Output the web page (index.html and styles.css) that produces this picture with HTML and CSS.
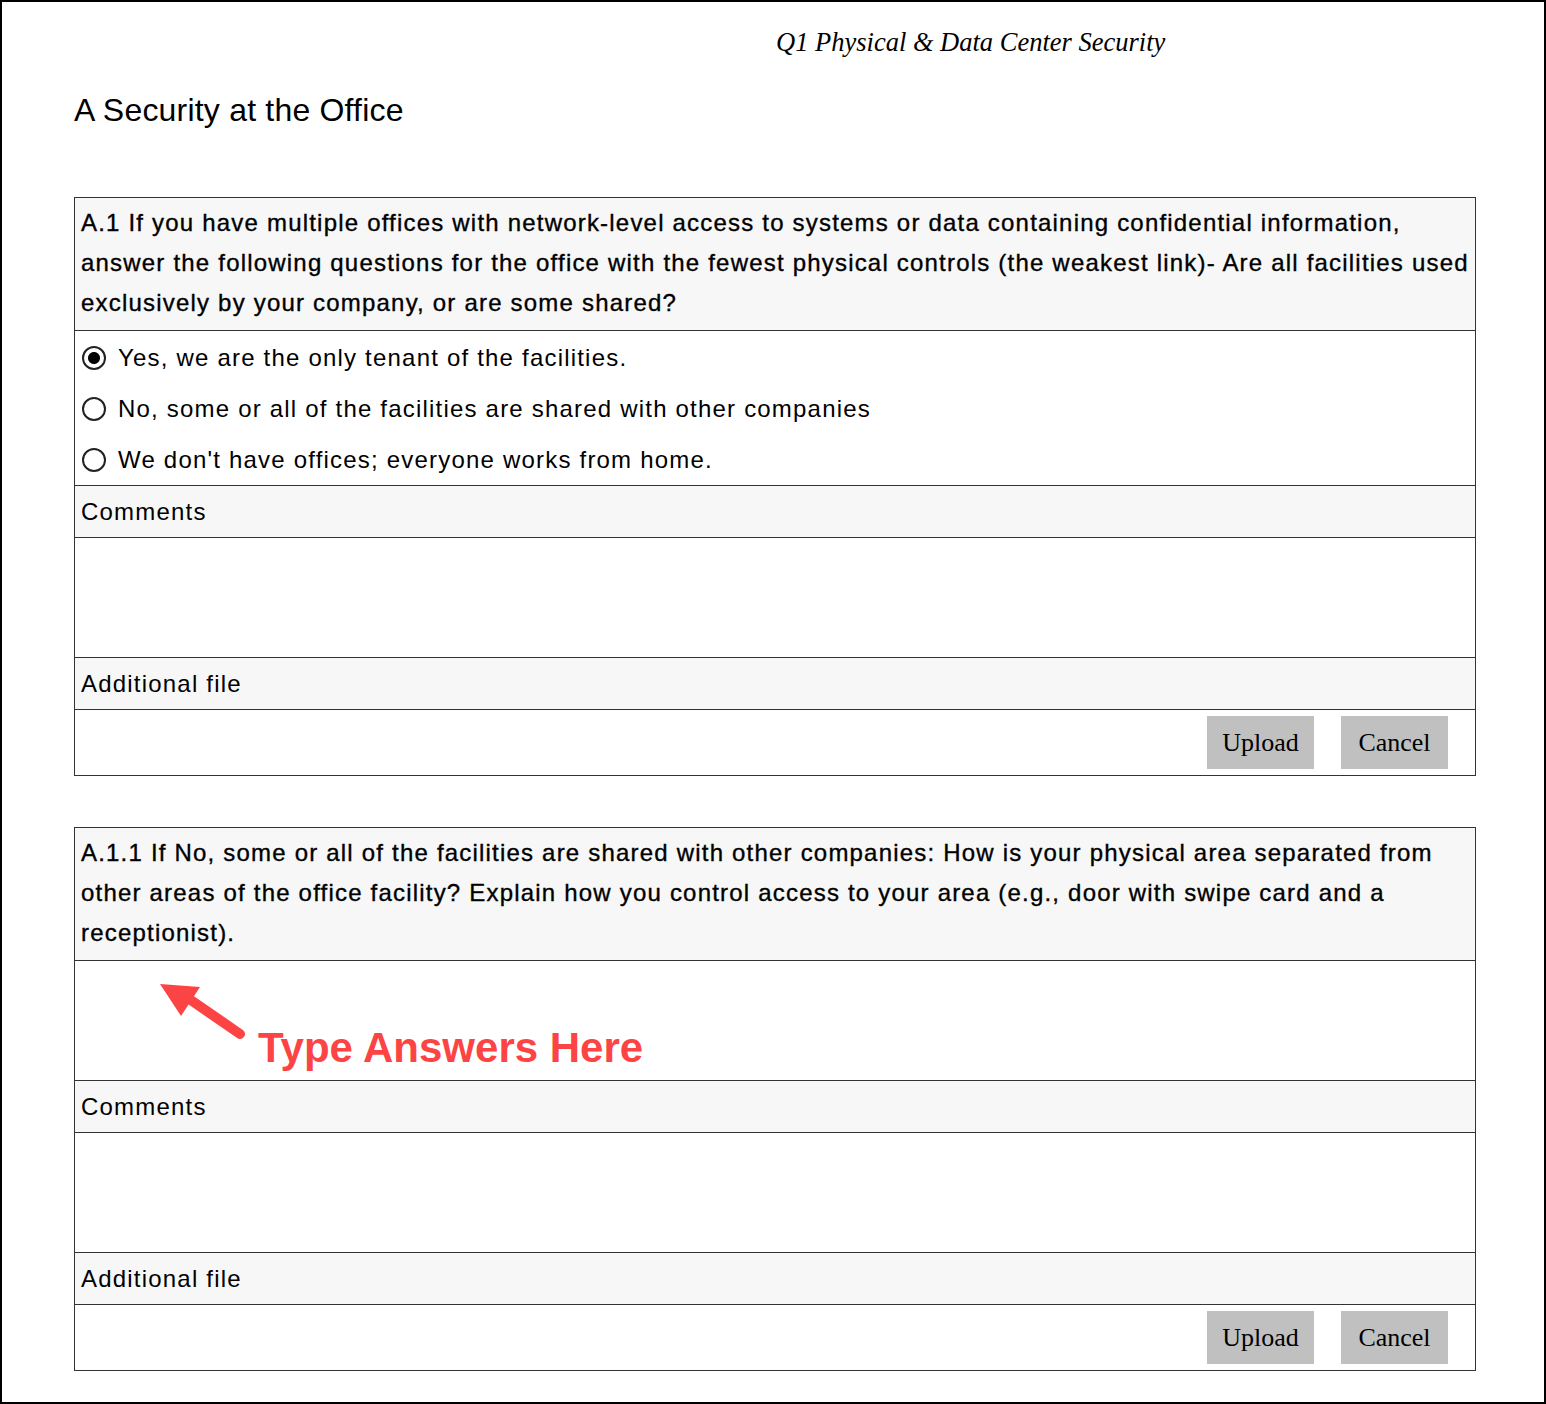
FILE: index.html
```html
<!DOCTYPE html>
<html lang="en">

<head>
    <meta charset="UTF-8">
    <meta name="viewport" content="width=device-width, initial-scale=1.0">
    <title>Q1 Physical &amp; Data Center Security</title>
    <link rel="stylesheet" href="styles.css">
</head>

<body>
    <div class="page">
        <div class="doc-title">Q1 Physical &amp; Data Center Security</div>
        <h1>A Security at the Office</h1>

        <div class="question">
            <div class="question-text">
                A.1 If you have multiple offices with network-level access to systems or data containing confidential information, answer the following questions for the office with the fewest physical controls (the weakest link)- Are all facilities used exclusively by your company, or are some shared?
            </div>
            <div class="options">
                <label class="option">
                    <input type="radio" name="a1" checked>
                    <span>Yes, we are the only tenant of the facilities.</span>
                </label>
                <label class="option">
                    <input type="radio" name="a1">
                    <span>No, some or all of the facilities are shared with other companies</span>
                </label>
                <label class="option">
                    <input type="radio" name="a1">
                    <span>We don't have offices; everyone works from home.</span>
                </label>
            </div>
            <div class="row-label">Comments</div>
            <div class="text-area"></div>
            <div class="row-label">Additional file</div>
            <div class="file-row">
                <button type="button">Upload</button>
                <button type="button">Cancel</button>
            </div>
        </div>

        <div class="question">
            <div class="question-text">
                A.1.1 If No, some or all of the facilities are shared with other companies: How is your physical area separated from other areas of the office facility? Explain how you control access to your area (e.g., door with swipe card and a receptionist).
            </div>
            <div class="text-area answer">
                <svg class="hint-arrow" width="200" height="90" viewBox="0 0 200 90">
                    <line x1="110" y1="35" x2="165" y2="73" stroke="#fd4444" stroke-width="10" stroke-linecap="round" />
                    <polygon points="85,23 125,26 106,55" fill="#fd4444" />
                </svg>
                <span class="hint-text">Type Answers Here</span>
            </div>
            <div class="row-label">Comments</div>
            <div class="text-area"></div>
            <div class="row-label">Additional file</div>
            <div class="file-row">
                <button type="button">Upload</button>
                <button type="button">Cancel</button>
            </div>
        </div>
    </div>
</body>

</html>
```

FILE: styles.css
```css
body {
    margin: 0;
    font-family: "Liberation Sans", Arial, sans-serif;
    color: #000;
    background-color: white;
}

.page {
    height: 100vh;
    box-sizing: border-box;
    border: 2px solid #000;
    padding: 0 68px 0 72px;
}

.doc-title {
    font-family: "Liberation Serif", "Times New Roman", serif;
    font-style: italic;
    font-size: 26.5px;
    padding-left: 702px;
    padding-top: 25px;
    line-height: 30px;
}

h1 {
    font-size: 32px;
    font-weight: normal;
    letter-spacing: 0.2px;
    margin: 33px 0 67px 0;
    line-height: 40px;
}

.question {
    border: 1px solid #333;
    margin-bottom: 51px;
}

.question-text {
    background-color: #f7f7f7;
    font-size: 24px;
    letter-spacing: 1.2px;
    line-height: 40px;
    padding: 5px 0 7px 6px;
    -webkit-text-stroke: 0.35px #000;
}

.options {
    border-top: 1px solid #333;
    padding: 1px 0 0 0;
}

.option {
    display: flex;
    align-items: center;
    height: 51px;
    font-size: 24px;
    letter-spacing: 1.2px;
    padding-left: 6px;
}

.option input {
    appearance: none;
    -webkit-appearance: none;
    box-sizing: border-box;
    width: 24px;
    height: 24px;
    margin: 0 12px 0 1px;
    border: 2px solid #222;
    border-radius: 50%;
    background-color: white;
}

.option input:checked {
    background: radial-gradient(circle, #000 0 5.5px, white 6.5px);
}

.row-label {
    background-color: #f7f7f7;
    border-top: 1px solid #333;
    font-size: 24px;
    letter-spacing: 1.2px;
    height: 51px;
    line-height: 51px;
    padding-left: 6px;
}

.text-area {
    border-top: 1px solid #333;
    height: 119px;
}

.answer {
    position: relative;
}

.hint-arrow {
    position: absolute;
    left: 0;
    top: 0;
}

.hint-text {
    position: absolute;
    left: 183px;
    top: 66px;
    line-height: 42px;
    white-space: nowrap;
    color: #fd4444;
    font-size: 42px;
    font-weight: bold;
}

.file-row {
    border-top: 1px solid #333;
    display: flex;
    justify-content: flex-end;
    gap: 27px;
    padding: 6px 27px 6px 0;
}

.file-row button {
    width: 107px;
    height: 53px;
    background-color: #c0c0c0;
    border: none;
    border-radius: 0;
    font-family: "Liberation Serif", "Times New Roman", serif;
    font-size: 26px;
    color: #000;
    padding: 0;
}
```
